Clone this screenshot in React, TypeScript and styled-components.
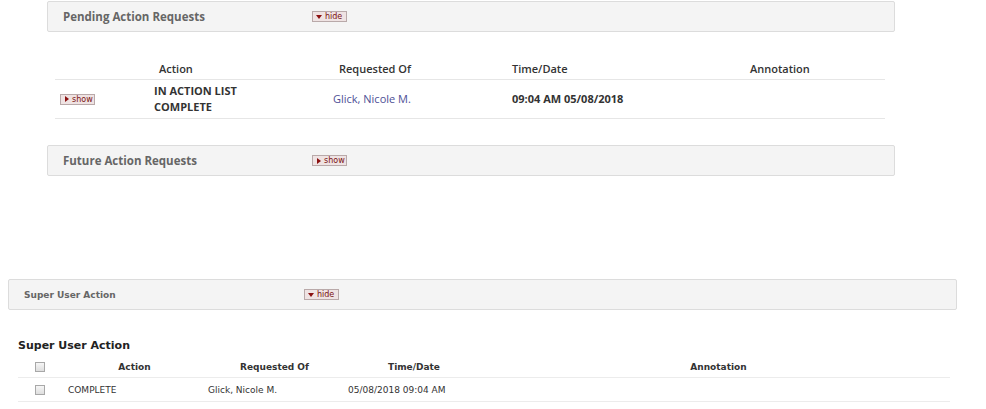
import React from "react";
import styled, { createGlobalStyle } from "styled-components";

const Global = createGlobalStyle`
  html, body { margin: 0; padding: 0; background: #fff; }
  body { font-family: "Open Sans", sans-serif; color: #333; }
`;

const Page = styled.div`
  width: 986px;
  height: 409px;
  overflow: hidden;
  display: flex;
  flex-direction: column;
`;

const UpperSection = styled.section`
  margin: 1px 0 0 47px;
  width: 848px;
  display: flex;
  flex-direction: column;
`;

const Panel = styled.div`
  box-sizing: border-box;
  height: 31px;
  display: flex;
  align-items: center;
  background: #f4f4f4;
  border: 1px solid #dcdcdc;
  border-radius: 2px;
  padding-left: 15px;
`;

const PanelTitle = styled.span<{ $variant?: "modern" | "classic" }>`
  font-family: ${(p) =>
    p.$variant === "classic" ? '"DejaVu Sans", Verdana, sans-serif' : '"Open Sans", sans-serif'};
  font-weight: bold;
  font-size: ${(p) => (p.$variant === "classic" ? "9px" : "11.5px")};
  color: #666;
  width: ${(p) => (p.$variant === "classic" ? "280px" : "249px")};
`;

const Toggle = styled.button`
  box-sizing: border-box;
  height: 11px;
  width: 35px;
  padding: 0 0 0 3px;
  display: inline-flex;
  align-items: center;
  gap: 3px;
  border: 1px solid #b9a9a9;
  background: #efe3e3;
  color: #7a1010;
  font-family: "DejaVu Sans", Verdana, sans-serif;
  font-size: 8px;
  line-height: 9px;
  cursor: pointer;
`;

const Arrow = styled.span<{ $open: boolean }>`
  width: 0;
  height: 0;
  ${(p) =>
    p.$open
      ? `border-left: 3px solid transparent; border-right: 3px solid transparent; border-top: 4px solid #8b1010;`
      : `border-top: 3px solid transparent; border-bottom: 3px solid transparent; border-left: 4px solid #8b1010; margin-left:1px;`}
`;

const ToggleButton = ({ open, label }: { open: boolean; label: string }) => (
  <Toggle>
    <Arrow $open={open} />
    {label}
  </Toggle>
);

const PendingTable = styled.div`
  margin: 26px 0 26px 8px;
  width: 830px;
  display: grid;
  grid-template-columns: 95px 150px 152px 260px 1fr;
`;

const PHead = styled.div<{ $pad?: number }>`
  height: 22px;
  box-sizing: border-box;
  display: flex;
  align-items: center;
  padding-left: ${(p) => p.$pad ?? 0}px;
  font-size: 11px;
  font-weight: 600;
  color: #333;
  border-bottom: 1px solid #e6e6e6;
`;

const PCell = styled.div<{ $pad?: number }>`
  height: 39px;
  box-sizing: border-box;
  display: flex;
  align-items: center;
  padding-left: ${(p) => p.$pad ?? 0}px;
  font-size: 11px;
  line-height: 16px;
  border-bottom: 1px solid #e6e6e6;
`;

const BoldText = styled.span`
  font-weight: bold;
  color: #333;
`;

const LinkText = styled.a`
  color: #4d4f96;
  text-decoration: none;
`;

const Spacer = styled.div`
  height: 103px;
`;

const LowerSection = styled.section`
  margin-left: 8px;
  width: 949px;
  display: flex;
  flex-direction: column;
`;

const Heading = styled.h3`
  margin: 29px 0 0 10px;
  font-family: "DejaVu Sans", Verdana, sans-serif;
  font-size: 11px;
  font-weight: bold;
  color: #222;
  line-height: 14px;
`;

const SuperTable = styled.div`
  margin: 4px 0 0 10px;
  width: 932px;
  display: grid;
  grid-template-columns: 43px 140px 140px 139px 1fr;
  font-family: "DejaVu Sans", Verdana, sans-serif;
  font-size: 9px;
`;

const SHead = styled.div<{ $center?: boolean }>`
  height: 21px;
  box-sizing: border-box;
  display: flex;
  align-items: center;
  justify-content: ${(p) => (p.$center ? "center" : "flex-start")};
  padding-left: 7px;
  font-weight: bold;
  color: #333;
  border-bottom: 1px solid #ececec;
`;

const SCell = styled.div`
  height: 24px;
  box-sizing: border-box;
  display: flex;
  align-items: center;
  padding-left: 7px;
  color: #333;
  border-bottom: 1px solid #ececec;
`;

const Check = styled.span`
  box-sizing: border-box;
  width: 10px;
  height: 10px;
  margin-left: 10px;
  border: 1px solid #a8a8a8;
  background: linear-gradient(#f6f6f6, #dedede);
`;

export default function App() {
  return (
    <Page>
      <Global />
      <UpperSection>
        <Panel>
          <PanelTitle>Pending Action Requests</PanelTitle>
          <ToggleButton open label="hide" />
        </Panel>
        <PendingTable>
          <PHead />
          <PHead $pad={9}>Action</PHead>
          <PHead $pad={39}>Requested Of</PHead>
          <PHead $pad={60}>Time/Date</PHead>
          <PHead $pad={38}>Annotation</PHead>

          <PCell $pad={5}>
            <ToggleButton open={false} label="show" />
          </PCell>
          <PCell $pad={4}>
            <BoldText>
              IN ACTION LIST
              <br />
              COMPLETE
            </BoldText>
          </PCell>
          <PCell $pad={33}>
            <LinkText href="#">Glick, Nicole M.</LinkText>
          </PCell>
          <PCell $pad={60}>
            <BoldText>09:04 AM 05/08/2018</BoldText>
          </PCell>
          <PCell />
        </PendingTable>
        <Panel>
          <PanelTitle>Future Action Requests</PanelTitle>
          <ToggleButton open={false} label="show" />
        </Panel>
      </UpperSection>
      <Spacer />
      <LowerSection>
        <Panel>
          <PanelTitle $variant="classic">Super User Action</PanelTitle>
          <ToggleButton open label="hide" />
        </Panel>
        <Heading>Super User Action</Heading>
        <SuperTable>
          <SHead>
            <Check />
          </SHead>
          <SHead $center>Action</SHead>
          <SHead $center>Requested Of</SHead>
          <SHead $center>Time/Date</SHead>
          <SHead $center>Annotation</SHead>

          <SCell>
            <Check />
          </SCell>
          <SCell>COMPLETE</SCell>
          <SCell>Glick, Nicole M.</SCell>
          <SCell>05/08/2018 09:04 AM</SCell>
          <SCell />
        </SuperTable>
      </LowerSection>
    </Page>
  );
}
